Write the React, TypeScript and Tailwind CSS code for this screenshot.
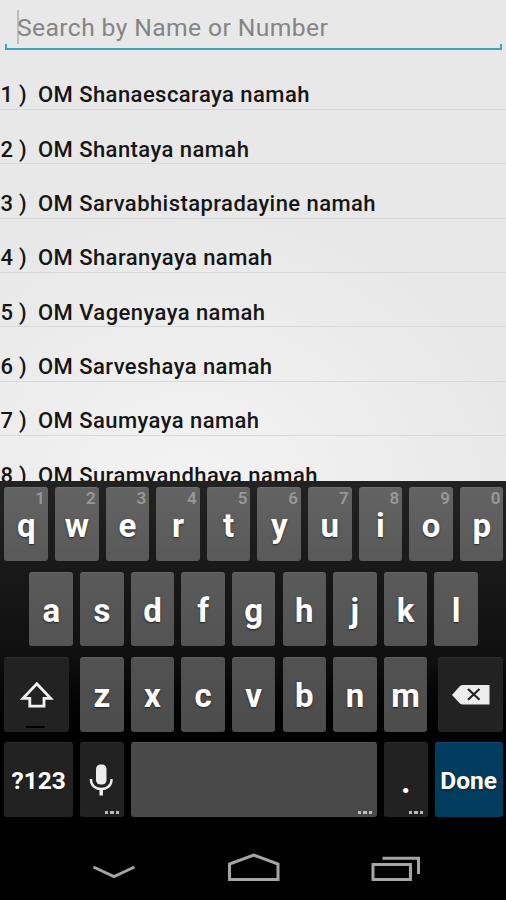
import type { ReactNode } from 'react';

const names = [
  'OM Shanaescaraya namah',
  'OM Shantaya namah',
  'OM Sarvabhistapradayine namah',
  'OM Sharanyaya namah',
  'OM Vagenyaya namah',
  'OM Sarveshaya namah',
  'OM Saumyaya namah',
  'OM Suramyandhaya namah',
];

const topRow = [
  { letter: 'q', hint: '1' },
  { letter: 'w', hint: '2' },
  { letter: 'e', hint: '3' },
  { letter: 'r', hint: '4' },
  { letter: 't', hint: '5' },
  { letter: 'y', hint: '6' },
  { letter: 'u', hint: '7' },
  { letter: 'i', hint: '8' },
  { letter: 'o', hint: '9' },
  { letter: 'p', hint: '0' },
];

const tones = {
  light: 'bg-linear-to-b from-[#636363] to-[#595959] border-[#6d6d6d]',
  mid: 'bg-linear-to-b from-[#5a5a5a] to-[#535353] border-[#656565]',
  low: 'bg-linear-to-b from-[#525252] to-[#4c4c4c] border-[#5e5e5e]',
  space: 'bg-[#494949] border-[#575757]',
  dark: 'bg-[#222222] border-[#2c2c2c]',
  blue: 'bg-[#003d5e] border-[#124b69]',
};

type KeyProps = {
  tone: keyof typeof tones;
  width?: string;
  hint?: string;
  more?: boolean;
  children?: ReactNode;
};

function Key({ tone, width = 'w-[43.6px]', hint, more, children }: KeyProps) {
  return (
    <button
      className={`relative flex h-[74.5px] shrink-0 items-center justify-center rounded-[3px] border-t font-bold text-white [text-shadow:0_1px_2px_#222] ${width} ${tones[tone]}`}
    >
      {hint && (
        <span className="absolute right-[3px] top-0 text-[17px] font-semibold leading-5 text-[#989898] [text-shadow:none]">
          {hint}
        </span>
      )}
      {children}
      {more && (
        <span className="absolute bottom-[2.5px] right-[4.5px] flex gap-[2px]">
          <i className="h-[3px] w-[3.5px] bg-[#bdbdbd]" />
          <i className="h-[3px] w-[3.5px] bg-[#bdbdbd]" />
          <i className="h-[3px] w-[3.5px] bg-[#bdbdbd]" />
        </span>
      )}
    </button>
  );
}

function Letter({ children }: { children: string }) {
  return <span className="pt-[3px] text-[33px] leading-[38px]">{children}</span>;
}

export default function App() {
  return (
    <div className="flex h-[900px] w-[506px] flex-col overflow-hidden bg-black font-[Roboto,sans-serif]">
      {/* Search and list */}
      <div className="h-[481px] shrink-0 overflow-hidden bg-[#e8e8e8] bg-[radial-gradient(ellipse_330px_280px_at_190px_490px,#f3f3f3_0%,#efefef_40%,#e8e8e8_100%)]">
        <div className="flex h-[55.6px] flex-col pl-[5px] pr-[4px] pt-[10px]">
          <div className="flex h-[34px] items-center pl-[12px]">
            <span className="h-[34px] w-[2px] shrink-0 bg-[#bdbdbd]" />
            <span className="-ml-[2px] whitespace-nowrap pt-px text-[24.7px] leading-[30px] tracking-[0.38px] text-[#858585]">
              Search by Name or Number
            </span>
          </div>
          <div className="h-[6px] shrink-0 border-x-2 border-b-2 border-[#3fa3bd]" />
        </div>
        <ul>
          {names.map((name, i) => (
            <li
              key={name}
              className="flex h-[54.33px] items-end whitespace-nowrap border-b border-[#d9d9d9] text-[22px] font-medium leading-[26.6px] text-[#161616]"
            >
              <span className="w-[38px] shrink-0 pl-[0.5px] tracking-[0.3px]">{i + 1} )</span>
              <span className="tracking-[0.44px]">{name}</span>
            </li>
          ))}
        </ul>
      </div>

      {/* Keyboard */}
      <div className="flex h-[349px] shrink-0 flex-col gap-[10.8px] bg-linear-to-b from-[#222222] via-[#101010] via-50% to-black to-85% pl-[4.4px] pr-[3px] pt-[5.5px]">
        <div className="flex gap-[7.03px]">
          {topRow.map((k) => (
            <Key key={k.letter} tone="light" hint={k.hint}>
              <Letter>{k.letter}</Letter>
            </Key>
          ))}
        </div>
        <div className="flex justify-center gap-[7.03px]">
          {[...'asdfghjkl'].map((c) => (
            <Key key={c} tone="mid">
              <Letter>{c}</Letter>
            </Key>
          ))}
        </div>
        <div className="flex justify-between">
          <Key tone="dark" width="w-[64.5px]">
            <svg className="h-[28px] w-[34px]" viewBox="0 0 34 28" fill="none" stroke="#f2f2f2" strokeWidth="2.8">
              <path d="M16.8 2.8 L30.6 17.4 H24 V25.2 H9.8 V17.4 H3 Z" />
            </svg>
            <span className="absolute bottom-[3.5px] left-[22px] h-[2.5px] w-[19px] bg-black" />
          </Key>
          <div className="flex gap-[7.03px]">
            {[...'zxcvbnm'].map((c) => (
              <Key key={c} tone="low">
                <Letter>{c}</Letter>
              </Key>
            ))}
          </div>
          <Key tone="dark" width="w-[64.5px]">
            <svg className="h-[20px] w-[38px]" viewBox="0 0 38 20">
              <path d="M0 10 L8 1 Q9 0 11 0 H37.5 V19.5 H11 Q9 19.5 8 18.5 Z" fill="#ededed" />
              <path d="M16 4 L27.5 14.8 M27.5 4 L16 14.8" stroke="#222" strokeWidth="2.2" />
            </svg>
          </Key>
        </div>
        <div className="flex gap-[7.03px]">
          <Key tone="dark" width="w-[68.7px]">
            <span className="pt-[2px] text-[24.5px]">?123</span>
          </Key>
          <Key tone="dark" more>
            <svg className="mr-[2px] h-[32px] w-[24px]" viewBox="0 0 24 32" fill="none" stroke="#eeeeee" strokeWidth="2.4">
              <rect x="7" y="0.5" width="10.5" height="20" rx="4.5" fill="#eeeeee" stroke="none" />
              <path d="M2 15 V16 C2 28 22.5 28 22.5 16 V15" />
              <path d="M12.2 24 V31.5" strokeWidth="3.5" />
            </svg>
          </Key>
          <Key tone="space" width="w-[246.2px]" more />
          <Key tone="dark" more>
            <span className="pt-[3px] text-[33px] leading-[38px]">.</span>
          </Key>
          <Key tone="blue" width="w-[68.4px]">
            <span className="pt-[2px] text-[24.5px]">Done</span>
          </Key>
        </div>
      </div>

      {/* Navigation bar */}
      <div className="flex h-[70px] shrink-0 justify-center bg-black">
        <svg className="h-[70px] w-[506px]" viewBox="0 0 506 70" fill="none" stroke="#a5a5a5" strokeWidth="3">
          <path d="M93.5 37 L114 46.5 L134.5 37" />
          <path d="M229.5 49.5 V34 L253.7 25 L278 34 V49.5 Z" />
          <path d="M373 34.5 H410.5 V49.5 H373 Z" />
          <path d="M382.5 28.2 H418.5 V44" />
        </svg>
      </div>
    </div>
  );
}
